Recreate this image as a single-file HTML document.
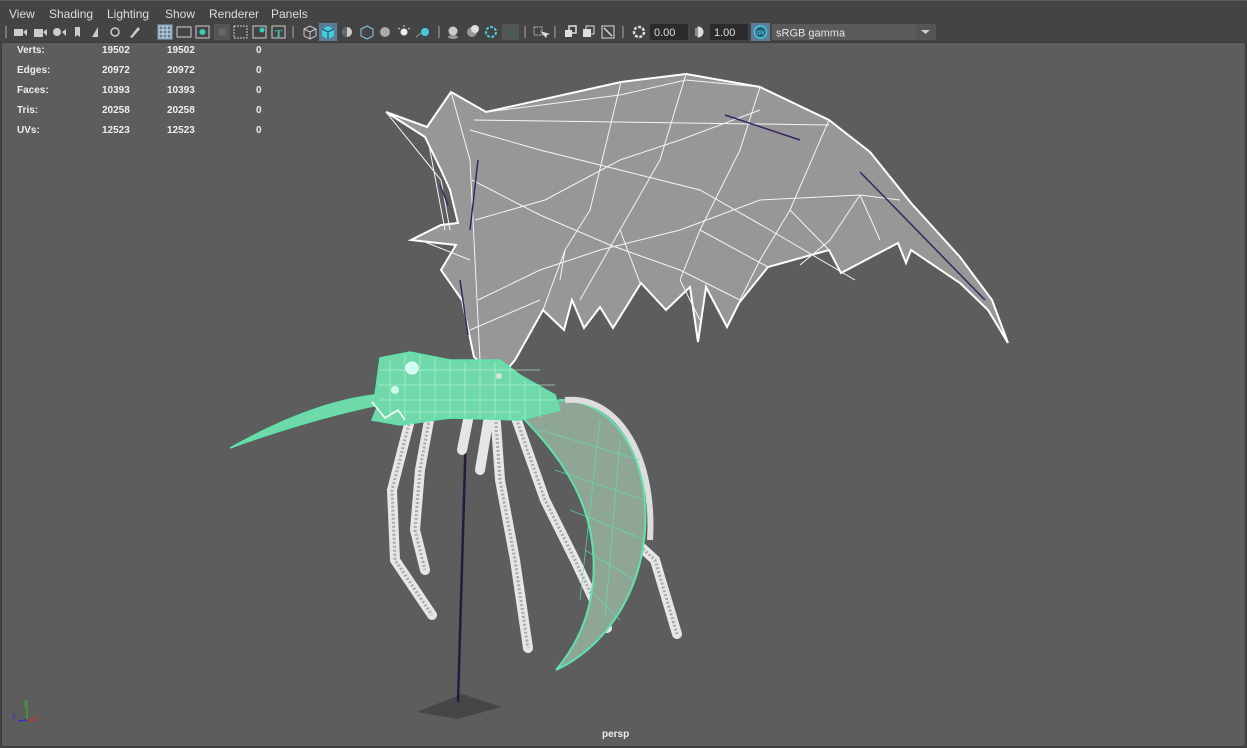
<!DOCTYPE html>
<html><head><meta charset="utf-8"><style>
*{margin:0;padding:0;box-sizing:border-box}
body{width:1247px;height:748px;background:#444;overflow:hidden;font-family:"Liberation Sans",sans-serif;position:relative}
#menu{position:absolute;left:0;top:0;width:1247px;height:23px;background:#444;border-top:1px solid #5a5a5a}
#menu span{position:absolute;top:6px;font-size:12px;color:#ddd}
#tb{position:absolute;left:0;top:22px;width:1247px;height:20px;background:#444}
.sep{position:absolute;top:4px;width:2px;height:12px;background:#777}
#vp{position:absolute;left:1px;top:42px;width:1245px;height:705px;background:#5d5d5d;border:1px solid #3a3a3a}
.st{position:absolute;font-size:10px;font-weight:bold;color:#eee}
</style></head><body>
<div id="menu">
<span style="left:9px">View</span><span style="left:49px">Shading</span><span style="left:107px">Lighting</span><span style="left:165px">Show</span><span style="left:209px">Renderer</span><span style="left:271px">Panels</span>
</div>
<div id="tb">
<div class="sep" style="left:5px"></div>
<svg style="position:absolute;left:0;top:0" width="480" height="20">
<g fill="#ccc">
<rect x="14" y="7" width="9" height="7"/><path d="M23 10l4-3v7z"/>
<rect x="34" y="7" width="9" height="8"/><path d="M43 10l4-3v7z"/>
<circle cx="57" cy="10" r="4"/><path d="M62 10l4-3v7z"/>
<path d="M75 5h5v10l-2.5-2-2.5 2z"/>
<path d="M92 15l6-10v10z"/><circle cx="115" cy="10" r="4" fill="none" stroke="#ccc" stroke-width="1.5"/>
<path d="M130 15l8-10 2 2-8 9z"/>
</g>
<rect x="157" y="2" width="16" height="16" fill="#5c7d99"/>
<rect x="159" y="4" width="12" height="12" fill="none" stroke="#ddd"/><path d="M163 4v12M167 4v12M159 8h12M159 12h12" stroke="#ddd"/>
<rect x="177" y="5" width="14" height="10" fill="none" stroke="#ccc"/>
<rect x="196" y="4" width="13" height="12" fill="none" stroke="#ccc"/><circle cx="202.5" cy="10" r="3" fill="#3cb"/>
<rect x="214" y="2" width="16" height="16" fill="#555"/><circle cx="222" cy="10" r="4" fill="#666"/>
<rect x="234" y="4" width="13" height="12" fill="none" stroke="#ccc" stroke-dasharray="2 1"/>
<rect x="253" y="4" width="13" height="12" fill="none" stroke="#ccc"/><circle cx="262" cy="8" r="2.5" fill="#3cb"/>
<rect x="272" y="4" width="13" height="12" fill="none" stroke="#ccc"/><text x="275" y="15" font-size="11" font-weight="bold" fill="#3cb" font-family="Liberation Serif">T</text>
<rect x="292" y="4" width="2" height="12" fill="#777"/>
<path d="M304 7l6-3 6 3v7l-6 3-6-3z M304 7l6 3 6-3 M310 10v7" fill="none" stroke="#ccc"/>
<rect x="319" y="1" width="18" height="18" fill="#5c7d99"/>
<path d="M322 7l6-3 6 3v7l-6 3-6-3z" fill="#4cd"/><path d="M322 7l6 3 6-3M328 10v7" stroke="#245" fill="none"/>
<circle cx="347" cy="10" r="5" fill="#ccc"/><path d="M347 5a5 5 0 0 0 0 10z" fill="#666"/>
<path d="M361 7l6-3 6 3v7l-6 3-6-3z" fill="none" stroke="#8ce"/>
<circle cx="385" cy="10" r="5" fill="#aaa"/>
<circle cx="404" cy="10" r="3.5" fill="#eee"/><path d="M404 3v2M398 6l2 1M410 6l-2 1" stroke="#ccc"/>
<circle cx="425" cy="10" r="4" fill="#4cd"/><path d="M416 15l5-4" stroke="#999"/>
<rect x="438" y="4" width="2" height="12" fill="#777"/>
<circle cx="453" cy="9" r="4.5" fill="#ccc"/><ellipse cx="453" cy="15" rx="5" ry="2" fill="#999"/>
<circle cx="472" cy="10" r="5" fill="#999"/><circle cx="475" cy="7" r="4" fill="#ddd"/>
</svg>
<svg style="position:absolute;left:480px;top:0" width="470" height="20">
<circle cx="11" cy="10" r="5" fill="none" stroke="#4cd" stroke-width="2" stroke-dasharray="3 1.5"/>
<rect x="22" y="2" width="17" height="16" fill="#555"/><rect x="26" y="6" width="10" height="10" fill="#4a5a55"/>
<rect x="44" y="4" width="2" height="12" fill="#777"/>
<rect x="54" y="5" width="8" height="8" fill="none" stroke="#ccc" stroke-dasharray="1.5 1"/><path d="M60 9l6 7 1-3 3-1z" fill="#ddd"/>
<rect x="74" y="4" width="2" height="12" fill="#777"/>
<rect x="85" y="8" width="7" height="7" fill="#ddd"/><rect x="89" y="4" width="7" height="7" fill="none" stroke="#ddd" stroke-width="1.5"/>
<rect x="103" y="7" width="8" height="8" fill="#ddd"/><rect x="106" y="4" width="8" height="8" fill="none" stroke="#ddd"/>
<rect x="122" y="4" width="12" height="12" fill="none" stroke="#ddd"/><path d="M124 6l8 8" stroke="#ddd" stroke-width="1.5"/>
<rect x="142" y="4" width="2" height="12" fill="#777"/>
<circle cx="159" cy="10" r="5" fill="none" stroke="#ddd" stroke-width="2.5" stroke-dasharray="3 1.5"/>
<rect x="170" y="2" width="38" height="16" fill="#2b2b2b"/><text x="174" y="14" font-size="11" fill="#ddd" font-family="Liberation Sans">0.00</text>
<path d="M218 5a5 5 0 0 1 0 10zM216 6v8" fill="#ddd" stroke="#ddd"/>
<rect x="230" y="2" width="38" height="16" fill="#2b2b2b"/><text x="234" y="14" font-size="11" fill="#ddd" font-family="Liberation Sans">1.00</text>
<rect x="271" y="1" width="19" height="18" fill="#5c7d99"/><circle cx="280.5" cy="10" r="6" fill="#2a5b76" stroke="#4cd" stroke-width="1.5"/><text x="276.5" y="12.5" font-size="5" fill="#4cd" font-weight="bold" font-family="Liberation Sans">ON</text>
<rect x="292" y="2" width="164" height="16" fill="#5a5a5a"/><text x="296" y="14.5" font-size="11" fill="#e5e5e5" font-family="Liberation Sans">sRGB gamma</text>
<rect x="436" y="2" width="20" height="16" fill="#555"/><path d="M441 8h9l-4.5 4z" fill="#ccc"/>
</svg>
</div>
<div id="vp">
<div class="st" style="left:15px;top:2px">Verts:</div><div class="st" style="left:100px;top:2px">19502</div><div class="st" style="left:165px;top:2px">19502</div><div class="st" style="left:254px;top:2px">0</div>
<div class="st" style="left:15px;top:22px">Edges:</div><div class="st" style="left:100px;top:22px">20972</div><div class="st" style="left:165px;top:22px">20972</div><div class="st" style="left:254px;top:22px">0</div>
<div class="st" style="left:15px;top:42px">Faces:</div><div class="st" style="left:100px;top:42px">10393</div><div class="st" style="left:165px;top:42px">10393</div><div class="st" style="left:254px;top:42px">0</div>
<div class="st" style="left:15px;top:62px">Tris:</div><div class="st" style="left:100px;top:62px">20258</div><div class="st" style="left:165px;top:62px">20258</div><div class="st" style="left:254px;top:62px">0</div>
<div class="st" style="left:15px;top:82px">UVs:</div><div class="st" style="left:100px;top:82px">12523</div><div class="st" style="left:165px;top:82px">12523</div><div class="st" style="left:254px;top:82px">0</div>
<div class="st" style="left:600px;top:686px;font-size:10px">persp</div>
</div>
<svg style="position:absolute;left:0;top:0" width="1247" height="748">
<path d="M417 712l45-18 40 13-45 12z" fill="#464646"/>
<path d="M466 430l-8 272" stroke="#2a1840" stroke-width="2.5"/>
<!-- wing -->
<path d="M386 112L427 127L451 92L486 112L621 82L686 74L760 87L829 120L870 152L911 203L960 257L992 300L1008 343L988 310L960 283L911 250L906 263L898 243L841 273L829 250L768 267L739 303L727 327L706 287L698 342L690 287L666 310L641 283L613 328L600 307L584 328L572 300L564 330L543 310L515 360L500 378L474 357L462 300L441 270L456 245L411 240L441 225L458 223L450 190L441 170L425 137Z" fill="#979797" stroke="#fff" stroke-width="2"/>
<g stroke="#f4f4f4" stroke-width="1" fill="none">
<path d="M386 112L441 180L450 230M451 92L470 160L480 360M486 112L620 95L686 80L760 87M474 120L829 125"/>
<path d="M621 82L590 210L565 250L560 280M686 74L660 160L620 230L580 300M760 87L740 150L700 230L680 280M829 120L790 210L760 260"/>
<path d="M470 130L540 150L620 170L700 190L770 230L855 280M472 180L540 215L610 245L680 270L740 300"/>
<path d="M475 220L545 200L620 160L680 140L760 110M478 300L540 270L600 250L680 230L760 200L860 195L900 200"/>
<path d="M860 195L830 240L800 265M860 195L880 240M760 260L740 300M680 280L700 320M620 230L640 283M565 250L543 310M790 210L829 250M700 230L768 267"/>
<path d="M429 145L445 230M420 240L470 260M470 330L540 300"/>
</g>
<path d="M860 172L985 300M725 115L800 140M478 160L470 230M440 185L448 205M460 280L468 335" stroke="#3a2460" stroke-width="1.5"/>
<!-- legs -->
<g stroke="#e6e6e6" stroke-width="10" fill="none" stroke-linecap="round">
<path d="M410 420L392 490L395 560L432 615"/>
<path d="M430 415L420 470L415 530L425 570"/>
<path d="M470 410L462 450"/>
<path d="M495 410L500 480L515 560L528 648"/>
<path d="M490 410L480 470"/>
<path d="M515 415L545 500L575 560L607 628"/>
<path d="M555 415L590 500L655 560L677 634"/>
</g>
<g stroke="#aaa" stroke-width="3" fill="none" stroke-dasharray="2 2">
<path d="M410 420L392 490L395 560L432 615"/><path d="M430 415L420 470L415 530L425 570"/><path d="M495 410L500 480L515 560L528 648"/><path d="M515 415L545 500L575 560L607 628"/><path d="M555 415L590 500L655 560L677 634"/>
</g>
<!-- abdomen -->
<path d="M560 400C610 400 650 450 645 530C640 600 600 650 556 670C590 630 600 580 590 530C580 480 545 440 520 415Z" fill="#8fa596" stroke="#5ee3ac" stroke-width="2"/>
<path d="M565 400C620 395 655 460 650 540" stroke="#ddd" stroke-width="6" fill="none"/>
<g stroke="#5ee3ac" stroke-width="0.8" fill="none" opacity=".8">
<path d="M540 430L640 460M555 470L645 500M570 510L645 540M585 550L635 580M590 590L620 620M600 420L580 600M620 440L605 620"/>
</g>
<!-- head/body -->
<path d="M230 448C280 420 330 400 375 395L380 358L410 352L450 360L500 360L520 375L555 395L560 410L520 420L450 418L400 425L372 420L378 405C330 415 280 430 230 448Z" fill="#6fd9aa" stroke="#5ee3ac" stroke-width="1.5"/>
<g stroke="#bff5dc" stroke-width="0.7" fill="none" opacity=".8">
<path d="M390 360v60M405 355v65M420 355v65M435 358v60M450 360v58M465 362v56M480 362v56M495 362v56M510 368v52M525 380v40M540 388v30"/>
<path d="M380 370H540M378 385H555M380 400H555M390 412H520"/>
</g>
<circle cx="412" cy="368" r="6" fill="#cfe" stroke="#fff"/><circle cx="395" cy="390" r="4" fill="#cfe"/>
<path d="M372 402L385 418L398 410L405 420" stroke="#fff" stroke-width="1.5" fill="none"/>
<circle cx="499" cy="376" r="3" fill="#ddd"/>
<path d="M27 720V705" stroke="#3a3" stroke-width="1.5"/><path d="M27 720H36" stroke="#c33" stroke-width="1.5"/><path d="M27 720L18 721" stroke="#33c" stroke-width="1.5"/>
<text x="24" y="705" font-size="8" fill="#3c3" font-family="Liberation Sans">y</text>
<text x="34" y="719" font-size="8" fill="#c33" font-family="Liberation Sans">x</text>
<text x="12" y="719" font-size="8" fill="#33c" font-family="Liberation Sans">z</text>
</svg>
</body></html>
